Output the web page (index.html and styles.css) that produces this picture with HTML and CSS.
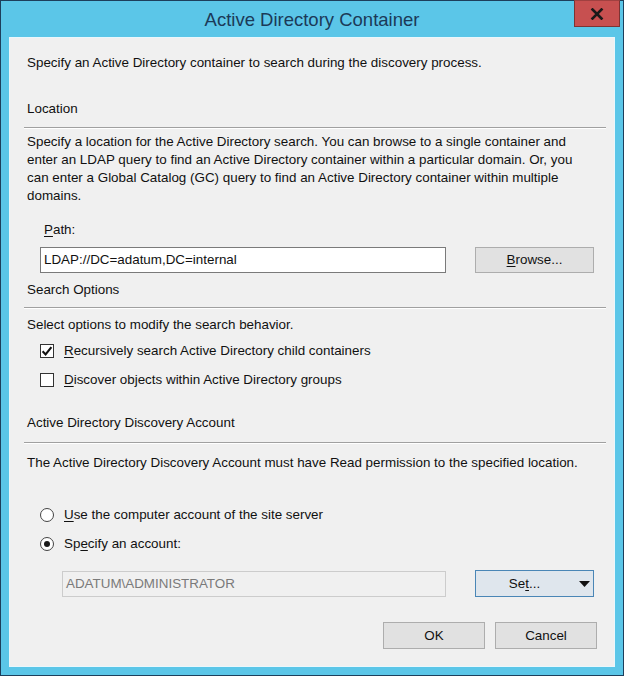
FILE: index.html
```html
<!DOCTYPE html>
<html lang="en">
<head>
<meta charset="utf-8">
<title>Active Directory Container</title>
<link rel="stylesheet" href="styles.css">
</head>
<body>
<div class="window">
  <div class="titlebar">
    <div class="tb-spacer"></div>
    <div class="title">Active Directory Container</div>
    <div class="tb-right">
      <div class="close">
        <svg width="14" height="12" viewBox="0 0 14 12"><path d="M2.5 1.5 L11.5 10.5 M11.5 1.5 L2.5 10.5" stroke="#1a1a1a" stroke-width="2.6" stroke-linecap="square"/></svg>
      </div>
    </div>
  </div>
  <div class="panel">
    <div class="txt intro">Specify an Active Directory container to search during the discovery process.</div>

    <div class="txt heading h-location">Location</div>
    <div class="sep s-location"></div>
    <div class="txt para">Specify a location for the Active Directory search. You can browse to a single container and<br>enter an LDAP query to find an Active Directory container within a particular domain. Or, you<br>can enter a Global Catalog (GC) query to find an Active Directory container within multiple<br>domains.</div>

    <div class="txt label-path"><u>P</u>ath:</div>
    <div class="row row-path">
      <div class="input">LDAP://DC=adatum,DC=internal</div>
      <div class="btn btn-browse"><u>B</u>rowse...</div>
    </div>

    <div class="txt heading h-search">Search Options</div>
    <div class="sep s-search"></div>
    <div class="txt select">Select options to modify the search behavior.</div>
    <div class="opt opt-cb1">
      <span class="checkbox"><svg width="14" height="14" viewBox="0 0 14 14"><path d="M2.6 7.2 L5.6 10.4 L11.4 3.2" fill="none" stroke="#111" stroke-width="2.1"/></svg></span>
      <span class="txt"><u>R</u>ecursively search Active Directory child containers</span>
    </div>
    <div class="opt opt-cb2">
      <span class="checkbox"></span>
      <span class="txt"><u>D</u>iscover objects within Active Directory groups</span>
    </div>

    <div class="txt heading h-account">Active Directory Discovery Account</div>
    <div class="sep s-account"></div>
    <div class="txt perm">The Active Directory Discovery Account must have Read permission to the specified location.</div>
    <div class="opt opt-r1">
      <span class="radio"></span>
      <span class="txt"><u>U</u>se the computer account of the site server</span>
    </div>
    <div class="opt opt-r2">
      <span class="radio checked"><span class="dot"></span></span>
      <span class="txt">Sp<u>e</u>cify an account:</span>
    </div>
    <div class="row row-account">
      <div class="input disabled">ADATUM\ADMINISTRATOR</div>
      <div class="btn btn-set">
        <span class="set-label">Se<u>t</u>...</span>
        <svg class="arrow" width="11" height="6" viewBox="0 0 11 6"><path d="M0 0 H11 L5.5 6 Z" fill="#111"/></svg>
      </div>
    </div>

    <div class="row row-buttons">
      <div class="btn btn-dlg">OK</div>
      <div class="btn btn-dlg">Cancel</div>
    </div>
  </div>
</div>
</body>
</html>
```

FILE: styles.css
```css
html, body {
  margin: 0;
  padding: 0;
}
body {
  width: 624px;
  height: 676px;
  overflow: hidden;
  font-family: "Liberation Sans", Arial, sans-serif;
}
.window {
  box-sizing: border-box;
  width: 624px;
  height: 676px;
  border: 1px solid #1d3f5c;
  background: #5bc6e8;
  display: flex;
  flex-direction: column;
}
.titlebar {
  height: 36px;
  display: grid;
  grid-template-columns: 1fr auto 1fr;
  align-items: start;
}
.title {
  font-size: 18.5px;
  color: #1b3a58;
  line-height: 20px;
  padding-top: 9px;
  white-space: nowrap;
}
.tb-right {
  display: flex;
  justify-content: flex-end;
  padding-right: 3px;
}
.close {
  box-sizing: border-box;
  width: 46px;
  height: 27px;
  margin-top: -1px;
  background: #c75050;
  border: 1px solid #7d3333;
  border-top-color: #a04040;
  display: flex;
  align-items: center;
  justify-content: center;
}
.panel {
  flex: 1;
  margin: 0 8px 8px 8px;
  border: 1px solid #eaf7fc;
  background: #f0f0f0;
  padding: 16px 8px 0 17px;
  display: flex;
  flex-direction: column;
  color: #111;
}
.txt {
  font-size: 13.4px;
  line-height: 17px;
  white-space: nowrap;
}
u {
  text-decoration: underline;
  text-underline-offset: 2px;
  text-decoration-thickness: 1px;
}
.sep {
  height: 1px;
  background: #a0a0a0;
  border-bottom: 1px solid #ffffff;
  margin-left: -3px;
}
.h-location { margin-top: 29px; }
.s-location { margin-top: 10px; }
.para { margin-top: 4px; line-height: 18px; }
.label-path { margin-top: 16px; margin-left: 17px; }
.row {
  display: flex;
  align-items: center;
}
.row-path { margin-top: 9px; margin-left: 13px; gap: 29px; }
.input {
  box-sizing: border-box;
  height: 26px;
  width: 406px;
  border: 1px solid #7a7a7a;
  background: #ffffff;
  font-size: 13.4px;
  line-height: 24px;
  padding-left: 3px;
  color: #111;
  white-space: nowrap;
}
.input.disabled {
  width: 384px;
  border-color: #cccccc;
  background: #f0f0f0;
  color: #7a7a7a;
}
.btn {
  box-sizing: border-box;
  height: 26px;
  width: 119px;
  border: 1px solid #adadad;
  background: #e1e1e1;
  font-size: 13.4px;
  line-height: 24px;
  text-align: center;
  color: #111;
}
.h-search { margin-top: 8px; }
.s-search { margin-top: 9px; }
.select { margin-top: 7px; }
.opt {
  display: flex;
  align-items: center;
  gap: 10px;
  margin-left: 13px;
  height: 17px;
}
.opt-cb1 { margin-top: 9px; }
.opt-cb2 { margin-top: 12px; }
.checkbox {
  box-sizing: border-box;
  width: 14px;
  height: 14px;
  border: 1px solid #333333;
  background: #ffffff;
  display: flex;
  align-items: center;
  justify-content: center;
  flex: none;
}
.checkbox svg { display: block; margin: -1px; }
.h-account { margin-top: 26px; }
.s-account { margin-top: 11px; }
.perm { margin-top: 10px; }
.opt-r1 { margin-top: 35px; }
.opt-r2 { margin-top: 12px; }
.radio {
  box-sizing: border-box;
  width: 14px;
  height: 14px;
  border: 1px solid #444444;
  border-radius: 50%;
  background: #ffffff;
  display: flex;
  align-items: center;
  justify-content: center;
  flex: none;
}
.dot {
  width: 6px;
  height: 6px;
  border-radius: 50%;
  background: #1a1a1a;
}
.row-account { margin-top: 18px; margin-left: 35px; gap: 29px; }
.btn-set {
  height: 27px;
  border-color: #4a86b6;
  background: #dfe6ed;
  display: flex;
  align-items: center;
  padding: 0 3px 0 0;
}
.set-label {
  flex: 1;
  text-align: center;
  padding-right: 6px;
}
.arrow { display: block; flex: none; }
.row-buttons {
  margin-top: 25px;
  justify-content: flex-end;
  gap: 10px;
  margin-right: 9px;
}
.btn-dlg {
  width: 102px;
  height: 27px;
  line-height: 25px;
  border-color: #adadad;
}
```
